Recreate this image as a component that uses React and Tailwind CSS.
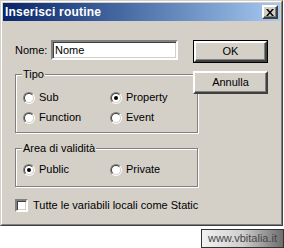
import React from "react";

const raised =
  "border-2 border-t-white border-l-white border-r-[#404040] border-b-[#404040] shadow-[inset_-1px_-1px_#808080]";
const sunken =
  "border-2 border-t-[#808080] border-l-[#808080] border-r-white border-b-white shadow-[inset_1px_1px_#404040,inset_-1px_-1px_#d4d0c8]";

function Radio({ label, checked }) {
  return (
    <label className="flex w-[87px] items-center gap-[4px]">
      <span className="flex h-[12px] w-[12px] shrink-0 items-center justify-center rounded-full border border-t-[#808080] border-l-[#808080] border-r-white border-b-white">
        <span className="flex h-[10px] w-[10px] items-center justify-center rounded-full border border-t-[#404040] border-l-[#404040] border-r-[#d4d0c8] border-b-[#d4d0c8] bg-white">
          {checked && <span className="h-[4px] w-[4px] rounded-full bg-black" />}
        </span>
      </span>
      <span>{label}</span>
    </label>
  );
}

function Group({ title, children, className = "" }) {
  return (
    <fieldset
      className={`border border-[#808080] pl-[7px] shadow-[inset_1px_1px_#fff,1px_1px_#fff] ${className}`}
    >
      <legend className="ml-[-1px] bg-[#d4d0c8] px-[1px] leading-[13px]">{title}</legend>
      {children}
    </fieldset>
  );
}

function Button({ children, primary }) {
  return (
    <button
      className={`flex h-[23px] w-[75px] items-center justify-center bg-[#d4d0c8] ${
        primary ? "border border-black" : ""
      }`}
    >
      <span className={`flex h-full w-full items-center justify-center ${raised}`}>{children}</span>
    </button>
  );
}

export default function App() {
  return (
    <div
      className="relative h-[248px] w-[284px] bg-white text-[11px] leading-[13px] text-black"
      style={{ fontFamily: '"Liberation Sans", Arial, sans-serif' }}
    >
      {/* window */}
      <div className="flex h-[226px] w-[283px] flex-col border border-t-[#d4d0c8] border-l-[#d4d0c8] border-r-[#404040] border-b-[#404040] bg-[#d4d0c8]">
        <div className="flex flex-1 flex-col border border-t-white border-l-white border-r-[#808080] border-b-[#808080] p-[1px]">
          {/* title bar */}
          <div className="flex h-[18px] items-center justify-between bg-gradient-to-r from-[#0a246a] to-[#a6caf0] px-[2px]">
            <span className="text-[12px] font-bold leading-none tracking-[0.2px] text-white">Inserisci routine</span>
            <span className={`flex h-[14px] w-[16px] items-center justify-center bg-[#d4d0c8] ${raised} border`}>
              <svg width="8" height="7" viewBox="0 0 8 7">
                <path d="M0 0h2l2 2.5L6 0h2L5 3.5 8 7H6L4 4.5 2 7H0l3-3.5z" fill="#000" />
              </svg>
            </span>
          </div>

          {/* body */}
          <div className="flex flex-1 pt-[19px] pl-[11px]">
            <div className="flex w-[166px] flex-col">
              <div className="flex items-center">
                <span className="w-[37px] pl-[1px]">Nome:</span>
                <div className={`flex h-[20px] w-[127px] items-center bg-white pl-[2px] ${sunken}`}>
                  Nome
                </div>
              </div>

              <Group title="Tipo" className="mt-[8px] ml-[1px] h-[65px] w-[164px]">
                <div className="mt-[10px] flex flex-col gap-[7px]">
                  <div className="flex">
                    <Radio label="Sub" />
                    <Radio label="Property" checked />
                  </div>
                  <div className="flex">
                    <Radio label="Function" />
                    <Radio label="Event" />
                  </div>
                </div>
              </Group>

              <Group title="Area di validità" className="mt-[9px] ml-[1px] h-[45px] w-[164px]">
                <div className="mt-[8px] flex">
                  <Radio label="Public" checked />
                  <Radio label="Private" />
                </div>
              </Group>

              <label className="mt-[12px] ml-[1px] flex items-center gap-[5px] whitespace-nowrap">
                <span className={`block h-[13px] w-[13px] shrink-0 bg-white ${sunken}`} />
                <span>Tutte le variabili locali come Static</span>
              </label>
            </div>

            <div className="ml-[13px] flex flex-col gap-[8px]">
              <Button primary>OK</Button>
              <Button>Annulla</Button>
            </div>
          </div>
        </div>
      </div>

      {/* watermark */}
      <div className="absolute left-[201px] top-[229px] flex h-[19px] w-[83px] items-center justify-center border border-[#333] bg-gradient-to-r from-[#f2f2f2] via-[#cfcfcf] to-[#6e6e6e] text-[11px] text-[#444]">
        www.vbitalia.it
      </div>
    </div>
  );
}
